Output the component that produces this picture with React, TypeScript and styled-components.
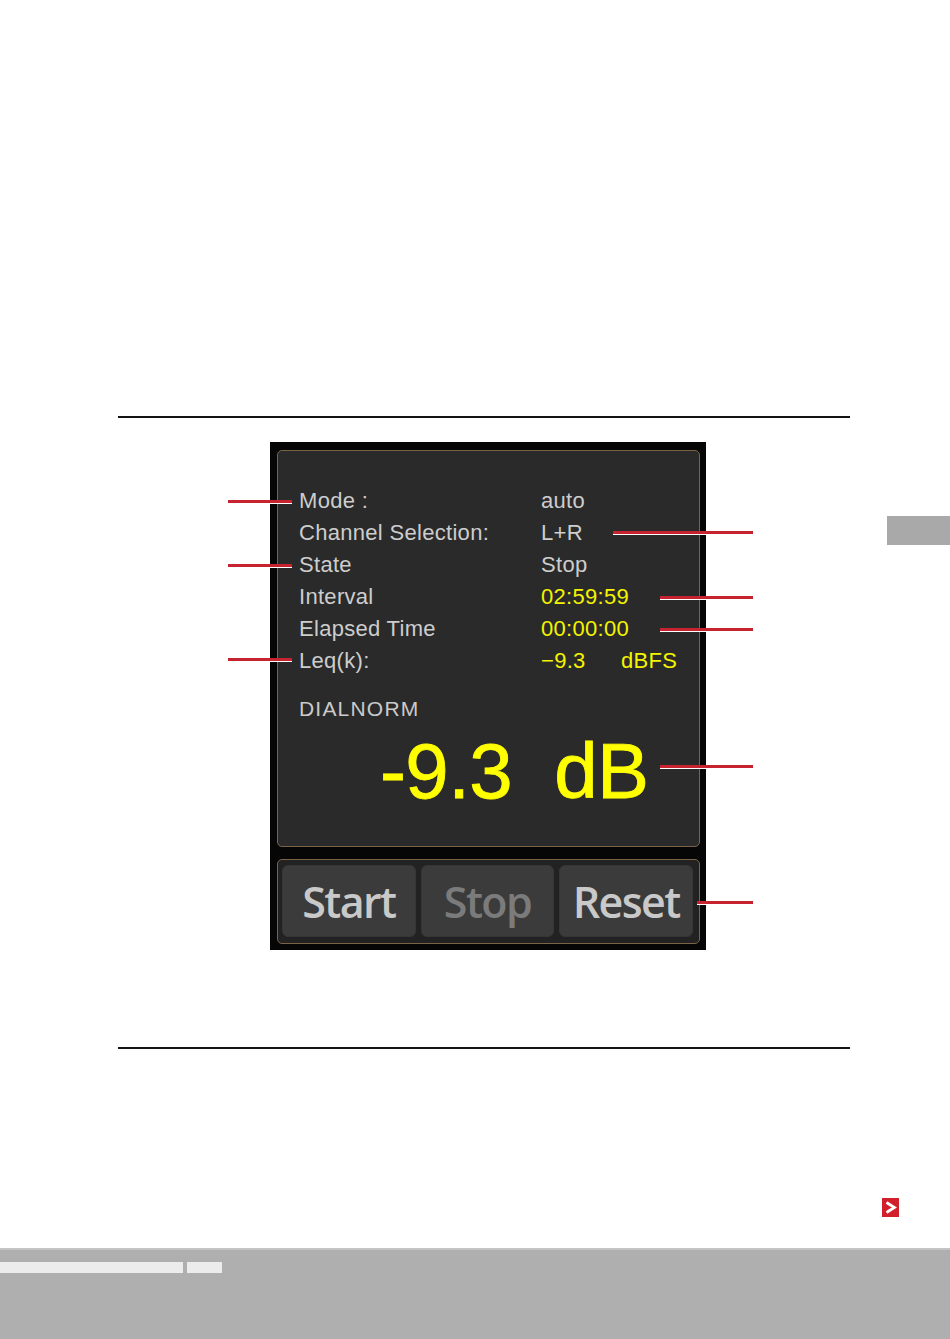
import React from "react";
import styled, { createGlobalStyle } from "styled-components";

const Global = createGlobalStyle`
  html, body { margin: 0; padding: 0; background: #ffffff; }
  body {
    width: 950px;
    height: 1339px;
    overflow: hidden;
    font-family: "Liberation Sans", Arial, sans-serif;
  }
`;

const Page = styled.div`
  position: relative;
  width: 950px;
  height: 1339px;
  display: flex;
  flex-direction: column;
  background: #ffffff;
`;

const Rule = styled.div<{ $top: number }>`
  margin: ${(p) => p.$top}px 100px 0 118px;
  height: 2px;
  background: #141414;
`;

const Figure = styled.div`
  position: relative;
  height: 629px;
  box-sizing: border-box;
  padding: 24px 0 0 270px;
`;

const Frame = styled.div`
  width: 436px;
  height: 508px;
  box-sizing: border-box;
  padding: 8px 6px 6px 7px;
  background: #060606;
  display: flex;
  flex-direction: column;
  gap: 12px;
`;

const Panel = styled.div`
  box-sizing: border-box;
  border: 1px solid #7a6445;
  border-radius: 5px;
  background: #2a2a2a;
`;

const DisplayPanel = styled(Panel)`
  height: 397px;
  padding: 34px 0 0 21px;
`;

const InfoGrid = styled.div`
  display: grid;
  grid-template-columns: 242px auto;
  grid-auto-rows: 32px;
  align-items: center;
  font-size: 22px;
  line-height: 32px;
  letter-spacing: 0.3px;
  color: #cdcdcd;
`;

const Label = styled.div`
  white-space: nowrap;
`;

const Value = styled.div<{ $accent?: boolean }>`
  display: flex;
  white-space: nowrap;
  color: ${(p) => (p.$accent ? "#f4f400" : "#cdcdcd")};
`;

const Number = styled.span`
  width: 80px;
`;

const Caption = styled.div`
  margin-top: 16px;
  font-size: 21px;
  line-height: 32px;
  letter-spacing: 1.2px;
  color: #cbcbcb;
`;

const BigReading = styled.div`
  margin: 7px 0 0 81px;
  font-size: 78px;
  line-height: 78px;
  letter-spacing: -0.6px;
  color: #ffff00;
  white-space: pre;
  -webkit-text-stroke: 0.8px #ffff00;
`;

const ButtonPanel = styled(Panel)`
  height: 85px;
  padding: 5px 6px 6px 4px;
  background: #222222;
  display: grid;
  grid-template-columns: repeat(3, 1fr);
  gap: 5px;
`;

const Button = styled.div<{ $disabled?: boolean }>`
  display: flex;
  align-items: center;
  justify-content: center;
  border-radius: 6px;
  background: #3b3b3b;
  border: 1px solid #343638;
  font-family: "Open Sans", "Noto Sans", sans-serif;
  font-weight: 600;
  font-size: 43px;
  letter-spacing: -1.6px;
  color: ${(p) => (p.$disabled ? "#7b7b7b" : "#c9c9c9")};
`;

const Leader = styled.div<{ $x: number; $y: number; $w: number }>`
  position: absolute;
  left: ${(p) => p.$x}px;
  top: ${(p) => p.$y - 419}px;
  width: ${(p) => p.$w}px;
  height: 3px;
  background: #c4232f;
  box-shadow: 0 1px 0 #ffffff;
`;

const NextRow = styled.div`
  display: flex;
  justify-content: flex-end;
  padding: 149px 51px 0 0;
`;

const NextMarker = styled.div`
  width: 17px;
  height: 19px;
  background: #d21f2c;
  display: flex;
  align-items: center;
  justify-content: center;
`;

const Footer = styled.div`
  margin-top: auto;
  height: 91px;
  box-sizing: border-box;
  background: #afafaf;
  border-top: 2px solid #c4c4c4;
  padding-top: 12px;
  display: flex;
  gap: 4px;
  align-items: flex-start;
`;

const FooterBar = styled.div<{ $w: number }>`
  width: ${(p) => p.$w}px;
  height: 11px;
  background: #ececec;
`;

const SideTab = styled.div`
  position: absolute;
  top: 516px;
  right: 0;
  width: 63px;
  height: 29px;
  background: #a9a9a9;
`;

const leaders = [
  { x: 228, y: 501, w: 64 },
  { x: 228, y: 565, w: 64 },
  { x: 228, y: 659, w: 64 },
  { x: 613, y: 532, w: 140 },
  { x: 660, y: 597, w: 93 },
  { x: 660, y: 629, w: 93 },
  { x: 660, y: 766, w: 93 },
  { x: 697, y: 902, w: 56 },
];

export default function App() {
  return (
    <>
      <Global />
      <Page>
        <SideTab />
        <Rule $top={416} />
        <Figure>
          <Frame>
            <DisplayPanel>
              <InfoGrid>
                <Label>Mode :</Label>
                <Value>auto</Value>
                <Label>Channel Selection:</Label>
                <Value>L+R</Value>
                <Label>State</Label>
                <Value>Stop</Value>
                <Label>Interval</Label>
                <Value $accent>02:59:59</Value>
                <Label>Elapsed Time</Label>
                <Value $accent>00:00:00</Value>
                <Label>Leq(k):</Label>
                <Value $accent>
                  <Number>−9.3</Number>
                  <span>dBFS</span>
                </Value>
              </InfoGrid>
              <Caption>DIALNORM</Caption>
              <BigReading>{"-9.3  dB"}</BigReading>
            </DisplayPanel>
            <ButtonPanel>
              <Button>Start</Button>
              <Button $disabled>Stop</Button>
              <Button>Reset</Button>
            </ButtonPanel>
          </Frame>
          {leaders.map((l, i) => (
            <Leader key={i} $x={l.x} $y={l.y} $w={l.w} />
          ))}
        </Figure>
        <Rule $top={0} />
        <NextRow>
          <NextMarker>
            <svg width="13" height="15" viewBox="0 0 13 15">
              <path d="M2.5 2.5 L10.5 7.5 L2.5 12.5" fill="none" stroke="#ffffff" strokeWidth="2.8" strokeLinejoin="miter" />
            </svg>
          </NextMarker>
        </NextRow>
        <Footer>
          <FooterBar $w={183} />
          <FooterBar $w={35} />
        </Footer>
      </Page>
    </>
  );
}
